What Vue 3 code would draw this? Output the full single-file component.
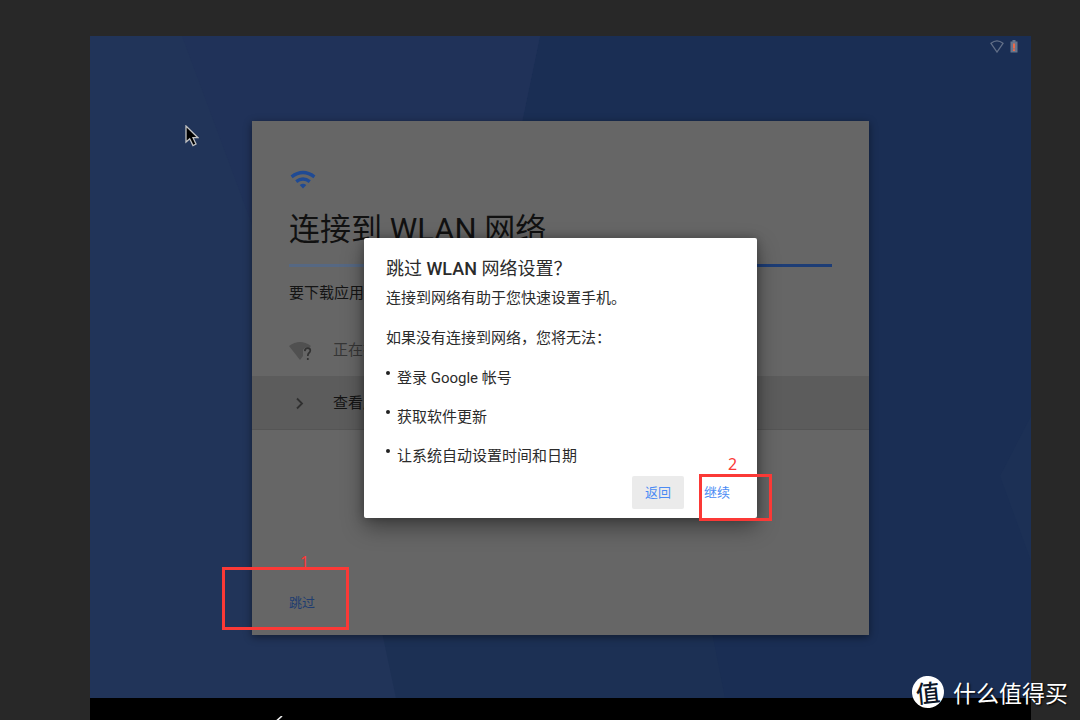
<script setup>
const losses = ['登录 Google 帐号', '获取软件更新', '让系统自动设置时间和日期']
</script>

<template>
  <div class="desktop">
    <main class="device">
      <section class="wallpaper">
        <svg class="facets" viewBox="0 0 941 662" preserveAspectRatio="none" aria-hidden="true">
          <rect width="941" height="662" fill="#1a2e54" />
          <path d="M0 0H450L400 240 306 662H0Z" fill="#213459" />
          <path d="M92 0H450L400 240 300 560Z" fill="#203259" />
          <path d="M240 350 306 662H635L615 560Z" fill="#1c3054" />
          <path d="M910 440 941 525V380Z" fill="#1c3055" />
        </svg>

        <div class="status">
          <svg width="14" height="13" viewBox="0 0 14 13" fill="none" stroke="#626f87" stroke-width="1.3">
            <path d="M1 3.3Q7 -1.4 13 3.3L7 12Z" />
          </svg>
          <svg width="8" height="13" viewBox="0 0 8 13">
            <path d="M2.5 0H5.5V1.5H7.5V12.5H.5V1.5H2.5Z" fill="#66748b" />
            <path d="M3 3.5H5V8.5H3ZM3 9.3H5V11H3Z" fill="#ed6848" />
          </svg>
        </div>

        <article class="card">
          <header class="head">
            <svg class="wifi" width="28" height="20" viewBox="0 0 28 20" fill="none" stroke="#1f4a94" stroke-width="3.4">
              <path d="M2.6 6.8Q14 -1.6 25.4 6.8" />
              <path d="M7.2 11.6Q14 6.6 20.8 11.6" />
              <path d="M10.7 15Q14 12.6 17.3 15L14 18.6Z" fill="#1f4a94" stroke="none" />
            </svg>
            <h1>连接到 WLAN 网络</h1>
            <div class="progress"><span></span></div>
            <p>要下载应用并</p>
          </header>
          <div class="row searching">
            <svg width="24" height="20" viewBox="0 0 24 20">
              <path d="M0 4Q11 -4 22 4L20 6Q16 4 14 8V14L11 18Z" fill="#505050" />
              <path d="M15.8 9.1Q16 6.2 18.7 6.2 21.3 6.2 21.3 8.6 21.3 9.9 19.9 11 18.8 11.9 18.8 14M18.8 16V18" fill="none" stroke="#323232" stroke-width="1.7" />
            </svg>
            <span>正在搜</span>
          </div>
          <button class="row networks" type="button">
            <svg width="24" height="20" viewBox="0 0 24 20" fill="none" stroke="#303030" stroke-width="1.8">
              <path d="M8 5.5 13 10.5 8 15.5" />
            </svg>
            <span>查看所</span>
          </button>
          <footer class="foot">
            <button class="skip" type="button">跳过</button>
          </footer>
        </article>
      </section>

      <nav class="navbar">
        <button class="back" type="button" aria-label="Back">
          <svg width="16" height="16" viewBox="0 0 16 16" fill="none" stroke="#eee" stroke-width="1.6">
            <path d="M12 0 3 8 12 16" />
          </svg>
        </button>
      </nav>

      <div class="overlay">
        <section class="dialog" role="dialog" aria-labelledby="dialog-title">
          <h2 id="dialog-title">跳过 <span>WLAN</span> 网络设置？</h2>
          <p>连接到网络有助于您快速设置手机。</p>
          <p>如果没有连接到网络，您将无法：</p>
          <ul>
            <li v-for="loss in losses" :key="loss">{{ loss }}</li>
          </ul>
          <div class="actions">
            <button class="filled" type="button">返回</button>
            <button type="button">继续</button>
          </div>
        </section>
      </div>
    </main>

    <svg class="cursor" width="14" height="22" viewBox="0 0 14 22">
      <path d="M1 1V17L4.7 13.7 8 20.5 11 19 8 12.7H13Z" fill="#000" stroke="#c2c2c2" stroke-width="1.3" />
    </svg>
    <div class="mark first"><span>1</span></div>
    <div class="mark second"><span>2</span></div>
    <div class="watermark"><b>值</b><span>什么值得买</span></div>
  </div>
</template>

<style>
body { margin: 0; }
</style>

<style scoped>
* { box-sizing: border-box; }
.desktop {
  position: relative;
  display: flex;
  min-height: 100vh;
  padding: 36px 49px 0 90px;
  overflow: hidden;
  background: #282828;
  color: #2b2b2b;
  font: 15px/20px Roboto, "Noto Sans CJK SC", sans-serif;
}
h1, h2, p, ul { margin: 0; padding: 0; font-weight: 400; }
button { padding: 0; border: 0; background: none; color: inherit; font: inherit; }
svg { display: block; flex: none; }
.device { position: relative; display: flex; flex: 1; flex-direction: column; }
.wallpaper { position: relative; display: flex; flex: 1; padding: 85px 162px 63px; }
.facets { position: absolute; inset: 0; width: 100%; height: 100%; }
.status { position: absolute; top: 4px; right: 13px; display: flex; gap: 6px; }
.card {
  position: relative;
  display: flex;
  flex: 1;
  flex-direction: column;
  background: #666;
  box-shadow: 0 2px 8px rgba(0, 0, 0, .45);
  color: #141414;
}
.head { padding: 49px 37px 0; }
h1 { margin-top: 16px; font-size: 31px; line-height: 48px; white-space: nowrap; color: #111; }
.progress { height: 3px; margin-top: 10px; background: #566883; }
.progress span { display: block; width: 50%; height: 3px; margin-left: auto; background: #1d3d76; }
.head p { margin-top: 16px; }
.row { display: flex; align-items: center; gap: 20px; width: 100%; padding: 0 37px; text-align: left; }
.searching { height: 52px; margin-top: 21px; color: #363636; }
.searching svg { margin-top: 4px; }
.networks { height: 54px; border-bottom: 1px solid #555; background: #5c5c5c; }
.foot { margin-top: auto; padding: 0 37px 22px; }
.skip { color: #203d70; font-size: 13px; line-height: 20px; }
.navbar { height: 22px; overflow: hidden; padding: 18px 180px 0; background: #000; }
.overlay {
  position: absolute;
  inset: 0;
  display: flex;
  align-items: center;
  justify-content: center;
}
.dialog {
  min-width: 393px;
  padding: 20px 22px 9px;
  border-radius: 2px;
  background: #fff;
  box-shadow: 0 9px 22px rgba(0, 0, 0, .4), 0 0 8px rgba(0, 0, 0, .25);
}
h2 { margin-bottom: 8px; font-size: 18px; line-height: 22px; }
h2 span { font-weight: 500; }
.dialog p { margin-bottom: 20px; }
.dialog ul { list-style: none; }
.dialog li { position: relative; margin-bottom: 19px; padding-left: 11px; }
.dialog li:last-child { margin-bottom: 10px; }
.dialog li::before {
  content: "";
  position: absolute;
  top: 3px;
  left: 0;
  width: 4px;
  height: 4px;
  border-radius: 50%;
  background: #222;
}
.actions { display: flex; justify-content: flex-end; gap: 7px; margin-right: -8px; }
.actions button { width: 52px; height: 33px; border-radius: 2px; color: #4b8bf4; font-size: 13px; }
.actions .filled { background: #ebebeb; }
.cursor { position: absolute; top: 125px; left: 185px; }
.mark { position: absolute; border: 3px solid #fb3936; color: #fb3936; font: 16px/20px "Noto Sans", sans-serif; }
.mark span { position: absolute; }
.first { top: 567px; left: 222px; width: 127px; height: 63px; }
.first span { top: -18px; left: 75px; }
.second { top: 474px; left: 699px; width: 73px; height: 47px; }
.second span { top: -23px; left: 26px; }
.watermark {
  position: absolute;
  right: 12px;
  bottom: 12px;
  display: flex;
  align-items: center;
  gap: 9px;
  color: #fff;
  font: 400 23px/30px "Noto Sans CJK SC", sans-serif;
  text-shadow: 1px 1px 2px #000;
}
.watermark b {
  width: 32px;
  height: 32px;
  border-radius: 50%;
  background: #fff;
  color: #0c1526;
  font-size: 24px;
  font-weight: 500;
  line-height: 31px;
  text-align: center;
  text-shadow: none;
  transform: rotate(-6deg);
}
</style>
